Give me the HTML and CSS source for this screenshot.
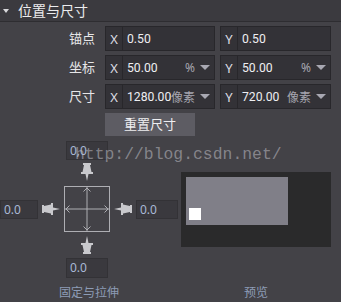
FILE: index.html
```html
<!DOCTYPE html>
<html>
<head>
<meta charset="utf-8">
<link rel="stylesheet" href="styles.css">
</head>
<body>
<div class="panel">
  <div class="header"><span class="caret"></span><span class="title">位置与尺寸</span></div>
  <div class="rows">
    <div class="row">
      <div class="label">锚点</div>
      <div class="field"><span class="axis">X</span><span class="val">0.50</span></div>
      <div class="field wide"><span class="axis">Y</span><span class="val">0.50</span></div>
    </div>
    <div class="row">
      <div class="label">坐标</div>
      <div class="field"><span class="axis">X</span><span class="val">50.00</span><span class="unit">%</span><span class="tri"></span></div>
      <div class="field wide"><span class="axis">Y</span><span class="val">50.00</span><span class="unit">%</span><span class="tri"></span></div>
    </div>
    <div class="row">
      <div class="label">尺寸</div>
      <div class="field"><span class="axis">X</span><span class="val">1280.00</span><span class="unit">像素</span><span class="tri"></span></div>
      <div class="field wide"><span class="axis">Y</span><span class="val">720.00</span><span class="unit">像素</span><span class="tri"></span></div>
    </div>
    <div class="btnrow"><div class="btn">重置尺寸</div></div>
  </div>
  <div class="bottom">
    <div class="anchor">
      <div class="grid">
        <div class="num top">0,0</div>
        <div class="pin pin-top">
          <svg width="12" height="18" viewBox="0 0 12 18"><path d="M2 0H10V2H9L10.5 9H12V11H7.5L6 18L4.5 11H0V9H1.5L3 2H2Z" fill="#c9c9cd"/></svg>
        </div>
        <div class="num left">0.0</div>
        <div class="pin pin-left">
          <svg width="18" height="12" viewBox="0 0 18 12"><path d="M0 2V10H2V9L9 10.5V12H11V7.5L18 6L11 4.5V0H9V1.5L2 3V2Z" fill="#c9c9cd"/></svg>
        </div>
        <div class="box">
          <svg width="46" height="46" viewBox="0 0 46 46">
            <rect x="0.5" y="0.5" width="45" height="45" fill="none" stroke="#aeaeb3"/>
            <path d="M23 1V45M1 23H45" stroke="#aeaeb3" stroke-width="1"/>
            <path d="M19.5 5.5L23 2L26.5 5.5M19.5 40.5L23 44L26.5 40.5M5.5 19.5L2 23L5.5 26.5M40.5 19.5L44 23L40.5 26.5" fill="none" stroke="#aeaeb3"/>
          </svg>
        </div>
        <div class="pin pin-right">
          <svg width="18" height="12" viewBox="0 0 18 12"><path d="M18 2V10H16V9L9 10.5V12H7V7.5L0 6L7 4.5V0H9V1.5L16 3V2Z" fill="#c9c9cd"/></svg>
        </div>
        <div class="num right">0.0</div>
        <div class="pin pin-bottom">
          <svg width="12" height="18" viewBox="0 0 12 18"><path d="M2 18H10V16H9L10.5 9H12V7H7.5L6 0L4.5 7H0V9H1.5L3 16H2Z" fill="#c9c9cd"/></svg>
        </div>
        <div class="num bot">0.0</div>
      </div>
      <div class="caption">固定与拉伸</div>
    </div>
    <div class="preview">
      <div class="screen">
        <div class="frame"><div class="dot"></div></div>
      </div>
      <div class="caption pcap">预览</div>
    </div>
  </div>
  <div class="watermark">http://blog.csdn.net/</div>
</div>
</body>
</html>
```
FILE: styles.css
```css
* { box-sizing: border-box; }
html, body { margin: 0; padding: 0; }
body {
  width: 341px;
  height: 302px;
  overflow: hidden;
  background: #434247;
  font-family: "Noto Sans", "Noto Sans CJK SC", sans-serif;
  font-size: 13px;
  color: #e6e6e8;
}
.panel { position: relative; width: 341px; height: 302px; }
.header {
  height: 22px;
  background: #3b3a3f;
  border-bottom: 1px solid #2e2d31;
  display: flex;
  align-items: center;
  padding-left: 3px;
}
.caret {
  width: 0; height: 0;
  border-left: 3px solid transparent;
  border-right: 3px solid transparent;
  border-top: 4px solid #d8d8dc;
  margin-right: 9px;
  margin-top: 1px;
}
.title { font-size: 14px; color: #ececee; line-height: 20px; }
.rows { padding-top: 4px; display: flex; flex-direction: column; gap: 4px; }
.row { display: flex; height: 25px; align-items: stretch; }
.label {
  width: 95px;
  margin-right: 10px;
  text-align: right;
  line-height: 24px;
  color: #e6e6e8;
}
.field {
  width: 110px;
  display: flex;
  align-items: center;
  background: #333237;
  border: 1px solid #28272b;
  white-space: nowrap;
}
.field.wide { margin-left: 5px; width: 111px; }
.axis {
  width: 17px;
  flex-shrink: 0;
  height: 100%;
  border-right: 1px solid #28272b;
  display: flex;
  align-items: center;
  justify-content: center;
  color: #dcdce2;
}
.val {
  padding-left: 4px;
  flex: 1;
  min-width: 0;
  color: #eeeef2;
  font-family: Roboto, "Noto Sans", sans-serif;
  font-size: 12.2px;
}
.unit { color: #a6a6b0; margin-right: 5px; flex-shrink: 0; font-size: 12px; }
.tri {
  flex-shrink: 0;
  width: 0; height: 0;
  border-left: 5px solid transparent;
  border-right: 5px solid transparent;
  border-top: 5px solid #a8a8b2;
  margin-right: 4px;
}
.btnrow { padding-left: 105px; }
.btn {
  width: 90px;
  height: 23px;
  background: #5d5c63;
  color: #eeeef0;
  text-align: center;
  line-height: 23px;
}
.bottom { display: flex; padding-top: 5px; }
.anchor { width: 178px; display: flex; flex-direction: column; }
.grid {
  display: grid;
  grid-template-columns: 38px 26px 46px 26px 42px;
  grid-template-rows: 19px 26px 46px 26px 20px;
}
.num {
  background: #3a393e;
  border: 1px solid #333236;
  color: #a9b9d6;
  font-size: 12px;
  line-height: 17px;
  padding-left: 3px;
}
.num.top { grid-column: 3; grid-row: 1; width: 42px; justify-self: center; }
.num.left { grid-column: 1; grid-row: 3; height: 19px; align-self: center; }
.num.right { grid-column: 5; grid-row: 3; height: 19px; align-self: center; }
.num.bot { grid-column: 3; grid-row: 5; width: 42px; justify-self: center; }
.pin { display: flex; align-items: center; justify-content: center; }
.pin svg { display: block; }
.pin-top { grid-column: 3; grid-row: 2; padding-bottom: 3px; }
.pin-left { grid-column: 2; grid-row: 3; }
.pin-right { grid-column: 4; grid-row: 3; }
.pin-bottom { grid-column: 3; grid-row: 4; }
.box { grid-column: 3; grid-row: 3; }
.box svg { display: block; }
.caption {
  text-align: center;
  font-size: 12px;
  color: #8d9cb6;
  margin-top: 5px;
}
.preview { margin-left: 3px; width: 150px; padding-top: 31px; display: flex; flex-direction: column; }
.screen { height: 75px; background: #2a2a2b; padding: 5px; }
.frame {
  width: 102px;
  height: 48px;
  background: #807f88;
  display: flex;
  align-items: flex-end;
  padding: 0 0 5px 3px;
}
.dot { width: 12px; height: 12px; background: #ffffff; }
.pcap { margin-top: 36px; }
.watermark {
  position: absolute;
  left: 75px;
  top: 145px;
  font-family: "Liberation Mono", monospace;
  font-size: 16.4px;
  color: rgba(190, 190, 196, 0.55);
  white-space: nowrap;
}
```
